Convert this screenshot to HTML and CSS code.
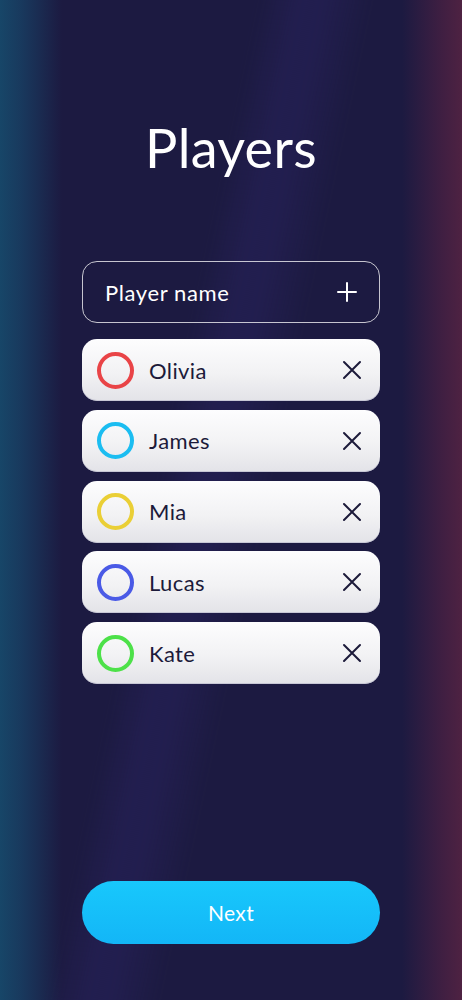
FILE: index.html
```html
<!DOCTYPE html>
<html>
<head>
<meta charset="utf-8">
<link rel="stylesheet" href="styles.css">
</head>
<body>
<div class="screen">
  <div class="streak"></div>
  <h1 class="title">Players</h1>
  <div class="input-row">
    <span class="placeholder">Player name</span>
    <svg class="plus" width="20" height="20" viewBox="0 0 20 20"><path d="M10 1V19M1 10H19" stroke="#fff" stroke-width="2" stroke-linecap="round"/></svg>
  </div>
  <div class="list">
    <div class="card"><span class="ring red"></span><span class="name">Olivia</span><svg class="x" width="20" height="20" viewBox="0 0 20 20"><path d="M2 2L18 18M18 2L2 18" stroke="#1c1a3a" stroke-width="2" stroke-linecap="round"/></svg></div>
    <div class="card"><span class="ring cyan"></span><span class="name">James</span><svg class="x" width="20" height="20" viewBox="0 0 20 20"><path d="M2 2L18 18M18 2L2 18" stroke="#1c1a3a" stroke-width="2" stroke-linecap="round"/></svg></div>
    <div class="card"><span class="ring yellow"></span><span class="name">Mia</span><svg class="x" width="20" height="20" viewBox="0 0 20 20"><path d="M2 2L18 18M18 2L2 18" stroke="#1c1a3a" stroke-width="2" stroke-linecap="round"/></svg></div>
    <div class="card"><span class="ring blue"></span><span class="name">Lucas</span><svg class="x" width="20" height="20" viewBox="0 0 20 20"><path d="M2 2L18 18M18 2L2 18" stroke="#1c1a3a" stroke-width="2" stroke-linecap="round"/></svg></div>
    <div class="card"><span class="ring green"></span><span class="name">Kate</span><svg class="x" width="20" height="20" viewBox="0 0 20 20"><path d="M2 2L18 18M18 2L2 18" stroke="#1c1a3a" stroke-width="2" stroke-linecap="round"/></svg></div>
  </div>
  <div class="spacer"></div>
  <button class="next">Next</button>
</div>
</body>
</html>
```
FILE: styles.css
```css
html, body {
  margin: 0;
  padding: 0;
}
body {
  width: 462px;
  height: 1000px;
  overflow: hidden;
  font-family: "Lato", "Noto Sans", sans-serif;
}
.screen {
  position: relative;
  width: 462px;
  height: 1000px;
  box-sizing: border-box;
  padding: 0 82px 56px;
  display: flex;
  flex-direction: column;
  background:
    linear-gradient(90deg, rgba(23,70,104,1) 0px, rgba(24,62,98,0.85) 22px, rgba(28,26,64,0) 62px),
    linear-gradient(270deg, rgba(78,34,66,1) 0px, rgba(72,32,66,0.8) 20px, rgba(28,26,64,0) 60px),
    #1c1a41;
  overflow: hidden;
}
.streak {
  position: absolute;
  left: 270px;
  top: -40px;
  width: 110px;
  height: 1100px;
  transform: rotate(12deg);
  transform-origin: top center;
  background: linear-gradient(90deg, rgba(45,38,105,0) 0%, rgba(45,38,105,0.35) 35%, rgba(45,38,105,0.35) 55%, rgba(45,38,105,0) 100%);
  filter: blur(6px);
  pointer-events: none;
}
.title {
  position: relative;
  margin: 118px 0 0;
  height: 60px;
  text-align: center;
  color: #fff;
  font-weight: 400;
  font-size: 54px;
  line-height: 60px;
  letter-spacing: 0.3px;
}
.input-row {
  position: relative;
  margin-top: 83px;
  height: 62px;
  box-sizing: border-box;
  border: 1px solid rgba(255,255,255,0.75);
  border-radius: 15px;
  display: flex;
  align-items: center;
  padding: 0 22px 0 22px;
  justify-content: space-between;
}
.placeholder {
  color: #fff;
  font-size: 22px;
  letter-spacing: 0.6px;
}
.list {
  position: relative;
  margin-top: 16px;
  display: flex;
  flex-direction: column;
  gap: 8.75px;
}
.card {
  height: 62px;
  box-sizing: border-box;
  border-radius: 15px;
  background: linear-gradient(180deg, #fdfdfe 0%, #f2f2f4 55%, #e3e3e8 100%);
  display: flex;
  align-items: center;
  padding: 0 18px 0 15px;
  box-shadow: inset 0 -1px 0 rgba(180,180,200,0.6);
}
.ring {
  width: 37px;
  height: 37px;
  box-sizing: border-box;
  border-radius: 50%;
  border: 4.5px solid;
  flex: none;
}
.red { border-color: #e94447; }
.cyan { border-color: #1bbdf1; }
.yellow { border-color: #eacf36; }
.blue { border-color: #4a5ae6; }
.green { border-color: #4de149; }
.name {
  margin-left: 15px;
  flex: 1;
  color: #1c1a3a;
  font-size: 22px;
  letter-spacing: 0.4px;
}
.x { flex: none; }
.spacer { flex: 1; }
.next {
  position: relative;
  height: 63px;
  border: none;
  border-radius: 32px;
  background: linear-gradient(180deg, #18c8fc 0%, #13b6f7 100%);
  color: #fff;
  font-family: "Lato", "Noto Sans", sans-serif;
  font-size: 21px;
  letter-spacing: 0.4px;
  padding: 0;
}
```
